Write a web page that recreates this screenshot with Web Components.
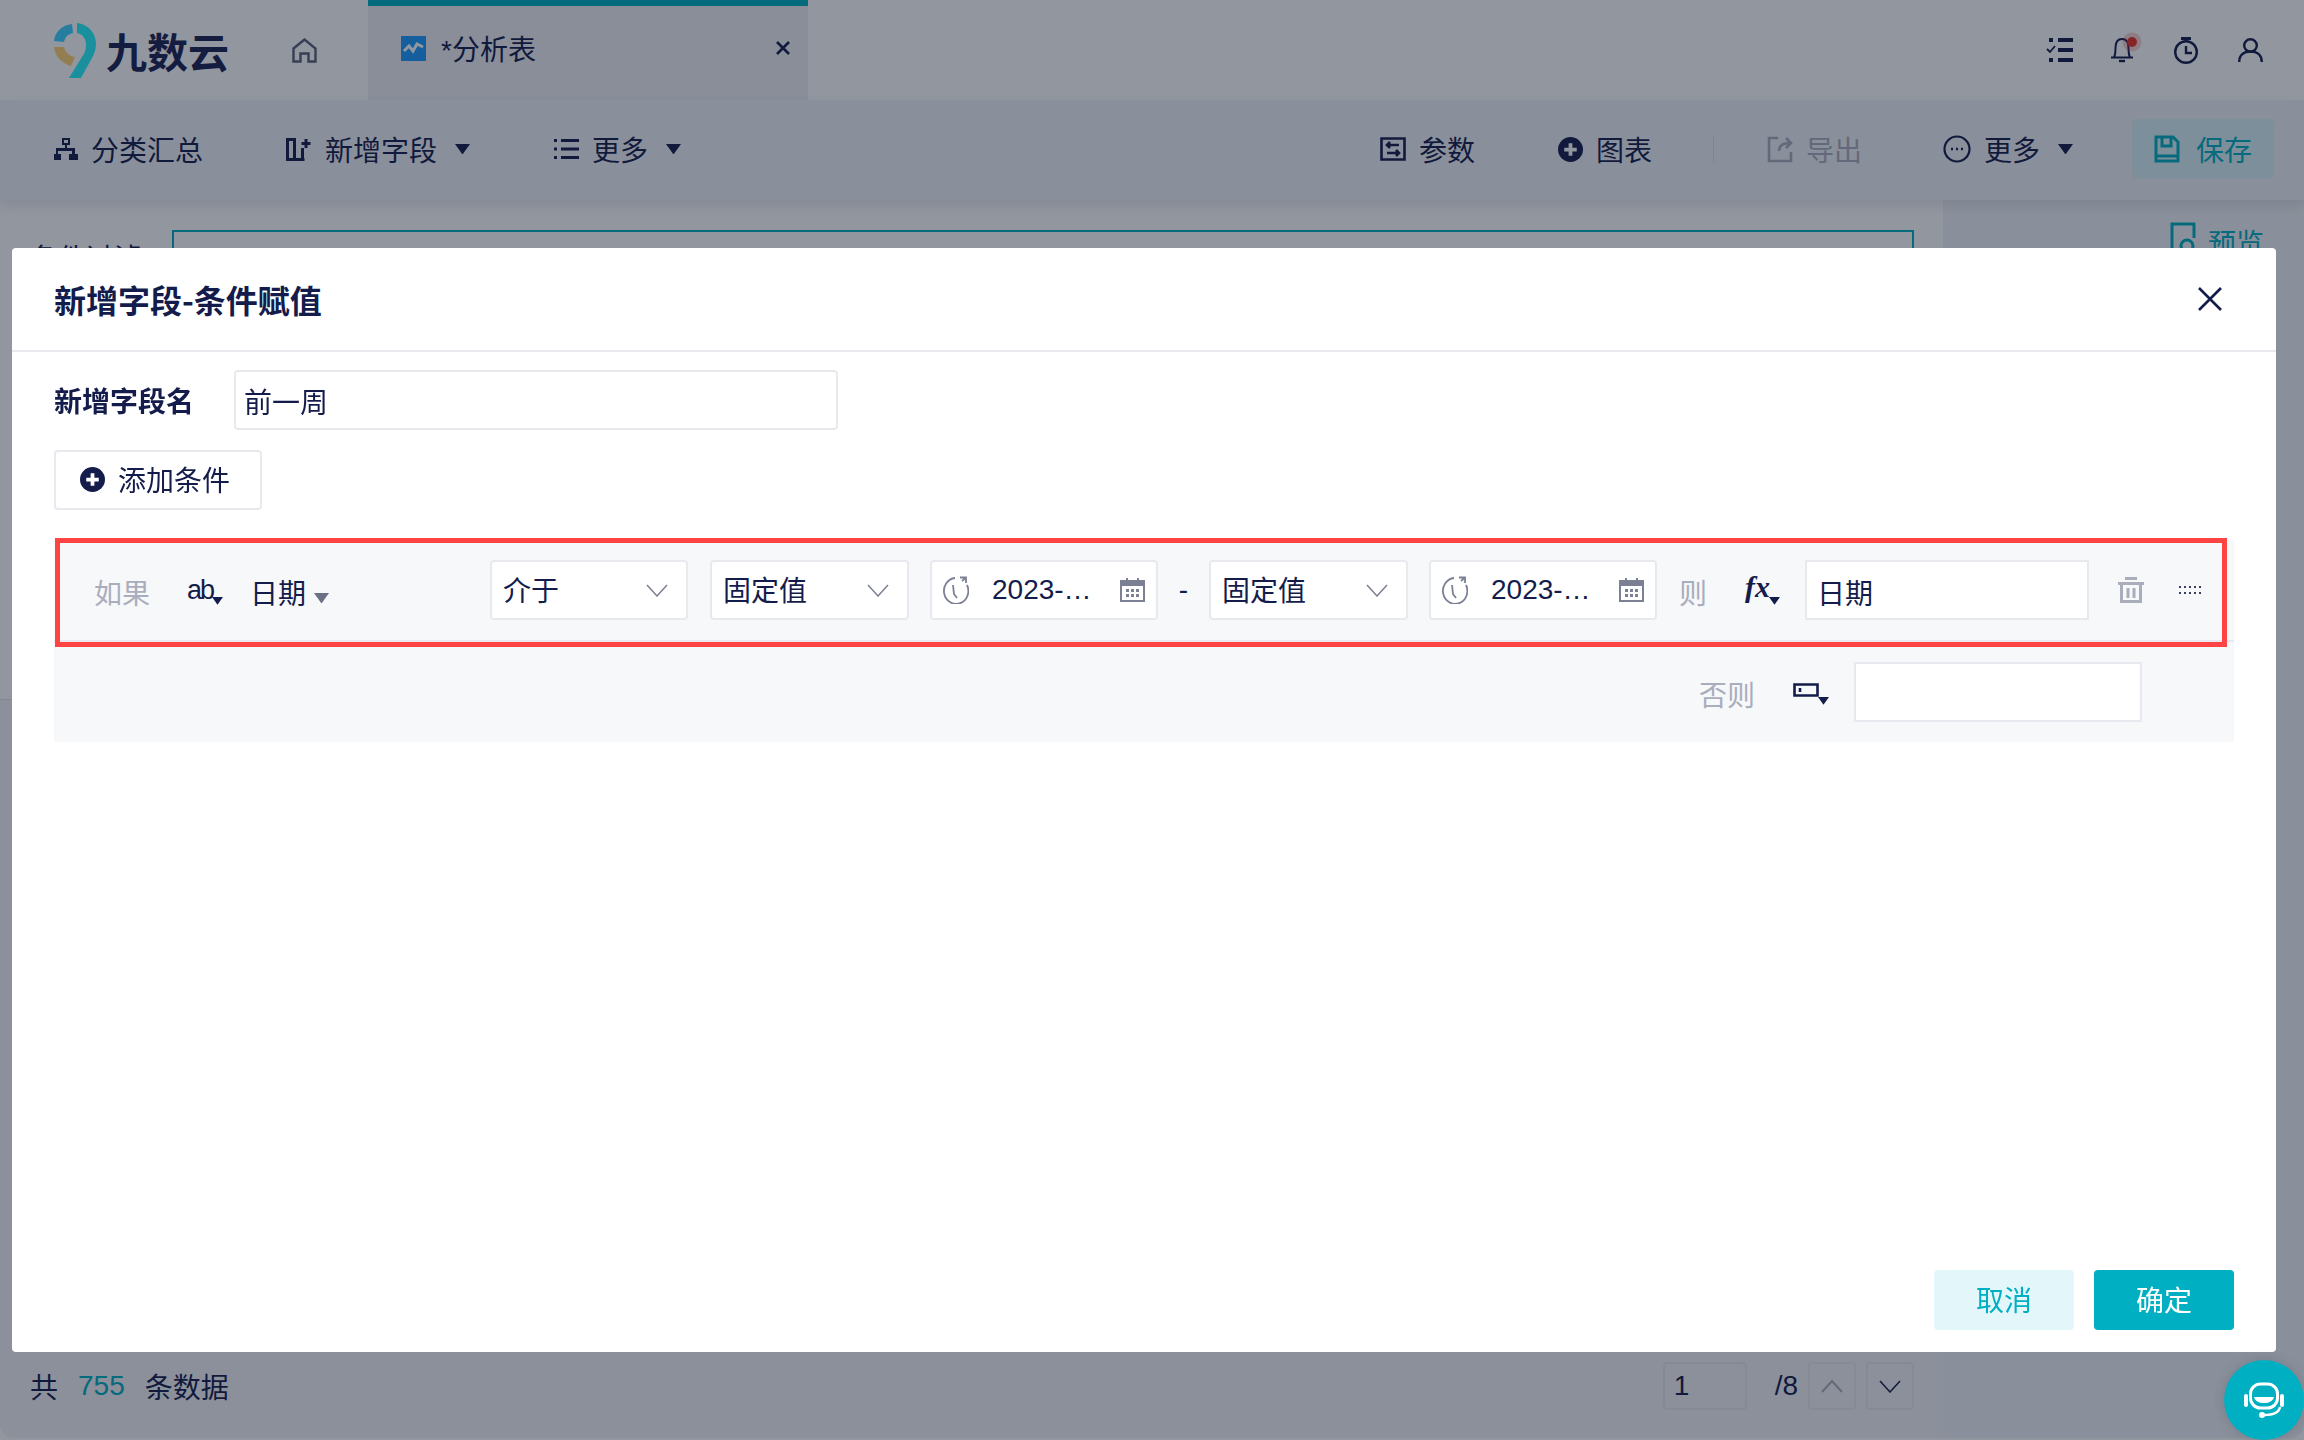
<!DOCTYPE html>
<html lang="zh">
<head>
<meta charset="utf-8">
<title>分析表</title>
<style>
    html, body { margin: 0; height: 100%; }
    body {
        width: 2304px;
        height: 1440px;
        overflow: hidden;
        font-family: "Liberation Sans", "Noto Sans CJK SC", sans-serif;
        --ink: #141c4c;
        --ink3: #a9adbc;
        --teal: #00afc2;
        --line: #e8e9ef;
    }
</style>
</head>
<body>
<app-page>
    <app-header></app-header>
    <app-toolbar></app-toolbar>
    <app-content></app-content>
</app-page>
<modal-mask></modal-mask>
<field-dialog heading="新增字段-条件赋值">
    <name-row></name-row>
    <add-condition></add-condition>
    <condition-block></condition-block>
</field-dialog>
<help-bubble></help-bubble>

<script>
const caret = (size = 14, color = 'currentColor') =>
    `<svg width="${size}" height="${size * 0.7}" viewBox="0 0 10 7"><path d="M0 0h10L5 7z" fill="${color}"/></svg>`;

const plusDot = (size) => `<svg width="${size}" height="${size}" viewBox="0 0 24 24"><circle cx="12" cy="12" r="12" fill="currentColor"/><path d="M12 6v12M6 12h12" stroke="#fff" stroke-width="3.6"/></svg>`;

const chevron = (color = '#7b8094') => `<svg width="22" height="13" viewBox="0 0 22 13"><path d="M1 1l10 11L21 1" fill="none" stroke="${color}" stroke-width="1.5"/></svg>`;

class AppPage extends HTMLElement {
    constructor() {
        super();
        this.attachShadow({ mode: 'open' });
        this.shadowRoot.innerHTML = `
            <style>
                :host { display: flex; flex-direction: column; width: 2304px; height: 1438px; background: #fff; border-radius: 0 0 14px 14px; overflow: hidden; color: var(--ink); }
            </style>
            <slot></slot>
        `;
    }
}

class AppHeader extends HTMLElement {
    constructor() {
        super();
        this.attachShadow({ mode: 'open' });
        this.shadowRoot.innerHTML = `
            <style>
                :host { display: flex; height: 100px; background: #fff; flex: none; }
                .brand { width: 240px; display: flex; align-items: center; padding: 0 0 0 54px; box-sizing: border-box; }
                .brand svg { flex: none; }
                .brand b { font: 700 41px "Noto Sans CJK SC", sans-serif; margin-left: 10px; color: #1a2452; line-height: 1; white-space: nowrap; }
                .home { width: 128px; display: flex; justify-content: center; align-items: center; }
                .tab { width: 440px; background: #eef1f5; border-top: 6px solid var(--teal); box-sizing: border-box; display: flex; align-items: center; padding: 0 17px 10px 33px; font-size: 28px; }
                .tab span { flex: 1; margin-left: 15px; }
                .tab .close { flex: none; }
                .tools { flex: 1; display: flex; justify-content: flex-end; align-items: center; padding-right: 41px; }
                .tools svg { display: block; overflow: visible; }
            </style>
            <div class="brand">
                <svg width="42" height="55" viewBox="0 0 42 55">
                    <path d="M18 1C8 2 1 9 0 18l10 1c1-5 4-8 9-9z" fill="#3ad2ff"/>
                    <path d="M0 24c1 9 7 16 17 19l4-9c-6-1-10-5-11-10z" fill="#ffd470"/>
                    <path d="M23 0c11 1 19 10 19 21 0 6-2 10-4 14L27 55H15l13-21c3-4 4-8 4-13 0-6-4-10-9-11z" fill="#25f5ff"/>
                </svg>
                <b>九数云</b>
            </div>
            <div class="home">
                <svg width="25" height="25" viewBox="0 0 25 25" fill="none" stroke="#5a6177" stroke-width="2.4"><path d="M1.500 10.500L12.500 1.500l11 9v13h-7v-8h-8v8h-7z"/></svg>
            </div>
            <div class="tab">
                <svg width="25" height="25" viewBox="0 0 25 25"><rect width="25" height="25" fill="#1c9cff"/><path d="M3 15l5-5 4 5 4-7 6 3" fill="none" stroke="#fff" stroke-width="3"/></svg>
                <span>*分析表</span>
                <svg class="close" width="16" height="16" viewBox="0 0 16 16"><path d="M2 2l12 12M14 2L2 14" stroke="currentColor" stroke-width="2.6"/></svg>
            </div>
            <div class="tools">
                <svg width="26" height="24" viewBox="0 0 26 24" fill="currentColor"><path d="M2 0h4v4H2zM2 20h4v4H2zM11 0h15v4H11zM11 10h15v4H11zM11 20h15v4H11z"/><path d="M0 11l3 3 5-6" fill="none" stroke="currentColor" stroke-width="1.8"/></svg>
                <svg style="margin-left:38px" width="22" height="24" viewBox="0 0 22 24" fill="none" stroke="currentColor" stroke-width="2"><path d="M0 19.500h22M3 19.500c1.500-3 1.500-5 1.500-10C4.500 4 7 1 11 1s6.500 3 6.500 8.500c0 5 0 7 1.500 10"/><path d="M8 23h6" stroke-width="2.400"/><circle cx="21" cy="4" r="5" fill="#e6332a" stroke="none"/><circle cx="21" cy="4" r="9.500" fill="#e6332a" opacity=".22" stroke="none"/></svg>
                <svg style="margin-left:41px" width="24" height="27" viewBox="0 0 24 27" fill="none" stroke="currentColor" stroke-width="2.400"><circle cx="12" cy="15" r="10.800"/><path d="M12 9v7h6" /><path d="M7 1.500h10" stroke-width="3"/><path d="M12 2v3"/></svg>
                <svg style="margin-left:40px" width="25" height="24" viewBox="0 0 25 24" fill="none" stroke="currentColor" stroke-width="2.400"><circle cx="12.500" cy="7.500" r="6.300"/><path d="M1.200 24c0-7 4.500-10.500 11.300-10.500S23.800 17 23.800 24"/></svg>
            </div>
        `;
    }
}

class ToolButton extends HTMLElement {
    constructor() {
        super();
        this.attachShadow({ mode: 'open' });
        this.shadowRoot.innerHTML = `
            <style>
                :host { display: flex; align-items: center; gap: 13px; font-size: 28px; white-space: nowrap; }
                :host([disabled]) { color: #a9adbc; }
                :host([accent]) { color: var(--teal); background: #d9f3f6; width: 142px; height: 60px; justify-content: center; gap: 16px; border-radius: 4px; }
                .tri { margin-left: 5px; display: flex; }
                ::slotted(svg) { display: block; flex: none; }
            </style>
            <slot name="icon"></slot>
            <slot></slot>
            ${this.hasAttribute('menu') ? `<span class="tri">${caret(15)}</span>` : ''}
        `;
    }
}

class AppToolbar extends HTMLElement {
    constructor() {
        super();
        this.attachShadow({ mode: 'open' });
        this.shadowRoot.innerHTML = `
            <style>
                :host { display: flex; align-items: center; height: 100px; flex: none; padding: 0 30px 0 54px; box-sizing: border-box; background: #f1f4f7; box-shadow: 0 6px 12px rgba(20,30,60,.1); position: relative; }
                .left, .right { display: flex; align-items: center; }
                .left { gap: 83px; flex: 1; padding-bottom: 2px; }
                .right { padding-bottom: 2px; }
                .sep { width: 1px; height: 28px; background: #dcdfe6; margin: 0 53px 0 61px; }
                .m1 { margin-right: 83px; }
                .m3 { margin-right: 81px; }
                .m4 { margin-right: 59px; }
            </style>
            <div class="left">
                <tool-button>
                    <svg slot="icon" width="24" height="22" viewBox="0 0 24 22" fill="currentColor"><path d="M8 0h8v7h-3v3h8v6h3v6h-9v-6h3v-3H4v3h3v6H0v-6h2v-6h9V7H8zM10 2v3h4V2z"/></svg>
                    分类汇总
                </tool-button>
                <tool-button menu>
                    <svg slot="icon" width="26" height="23" viewBox="0 0 26 23" fill="none" stroke="currentColor" stroke-width="3"><path d="M1.500 1.500h7v20h-7zM8.500 21.500h10M16.500 10v11.500M20 1v9M15.500 5.500h9"/></svg>
                    新增字段
                </tool-button>
                <tool-button menu>
                    <svg slot="icon" width="26" height="22" viewBox="0 0 26 22" fill="none" stroke="currentColor" stroke-width="3"><path d="M8 2.500h18M8 11h18M8 19.500h18M1 2.500h3M1 11h3M1 19.500h3"/></svg>
                    更多
                </tool-button>
            </div>
            <div class="right">
                <tool-button class="m1">
                    <svg slot="icon" width="26" height="24" viewBox="0 0 26 24" fill="none" stroke="currentColor" stroke-width="2.600"><path d="M1.500 1.500h23v21h-23zM19 8H7m3-3L7 8l3 3M7 16h12m-3-3l3 3-3 3"/></svg>
                    参数
                </tool-button>
                <tool-button>
                    <span slot="icon" style="display:flex">${plusDot(25)}</span>
                    图表
                </tool-button>
                <div class="sep"></div>
                <tool-button disabled class="m3">
                    <svg slot="icon" width="26" height="28" viewBox="0 0 26 28" fill="none" stroke="currentColor" stroke-width="2.600"><path d="M11 3H2v23h22v-9M12 16c0-6 4-8 11-8m-4-5l5 5-5 5"/></svg>
                    导出
                </tool-button>
                <tool-button menu class="m4">
                    <svg slot="icon" width="28" height="28" viewBox="0 0 28 28" fill="none" stroke="currentColor" stroke-width="2.200"><circle cx="14" cy="14" r="12.500"/><path d="M8 14h2M13 14h2M18 14h2" stroke-width="2.600"/></svg>
                    更多
                </tool-button>
                <tool-button accent>
                    <svg slot="icon" width="26" height="28" viewBox="0 0 26 28" fill="none" stroke="currentColor" stroke-width="3"><path d="M2 2h17l5 5v19H2zM8 2v9h9V2M2 21h22"/></svg>
                    保存
                </tool-button>
            </div>
        `;
    }
}

class AppContent extends HTMLElement {
    constructor() {
        super();
        this.attachShadow({ mode: 'open' });
        this.shadowRoot.innerHTML = `
            <style>
                :host { display: flex; flex: 1; min-height: 0; background: #fff; }
                .main { flex: none; width: 1943px; display: flex; flex-direction: column; }
                .filter { display: flex; gap: 28px; flex: none; height: 500px; box-sizing: border-box; padding: 30px 0 0 30px; border-bottom: 1px solid #e2e4ea; }
                .filter span { font-size: 28px; width: 114px; line-height: 60px; white-space: nowrap; overflow: hidden; }
                .filter div { width: 1742px; height: 60px; border: 2px solid var(--teal); box-sizing: border-box; }
                .table { flex: 1; background: #f3f5f8; display: flex; flex-direction: column; justify-content: flex-end; padding: 0 29px 28px 30px; }
                .foot { display: flex; align-items: center; font-size: 28px; height: 48px; }
                .foot b { color: var(--teal); font-weight: 400; margin: 0 20px; }
                .pager { margin-left: auto; display: flex; align-items: center; }
                .box { border: 2px solid var(--line); border-radius: 4px; box-sizing: border-box; height: 48px; display: flex; align-items: center; justify-content: center; }
                .num { width: 84px; justify-content: flex-start; padding-left: 9px; margin-right: 28px; }
                .sq { width: 48px; margin-left: 10px; }
                .side { flex: 1; background: #f1f4f7; display: flex; justify-content: flex-end; padding: 22px 40px 0 0; }
                .preview { display: flex; gap: 10px; font-size: 28px; color: var(--teal); height: 32px; align-items: flex-start; }
            </style>
            <div class="main">
                <div class="filter"><span>条件过滤</span><div></div></div>
                <div class="table">
                    <div class="foot">
                        <span>共</span><b>755</b><span>条数据</span>
                        <div class="pager">
                            <div class="box num">1</div>
                            <span>/8</span>
                            <div class="box sq"><svg width="22" height="13" viewBox="0 0 22 13"><path d="M1 12L11 1l10 11" fill="none" stroke="#a9adbc" stroke-width="2"/></svg></div>
                            <div class="box sq">${chevron('currentColor')}</div>
                        </div>
                    </div>
                </div>
            </div>
            <div class="side">
                <div class="preview">
                    <svg width="28" height="34" viewBox="0 0 28 34" fill="none" stroke="currentColor" stroke-width="3"><path d="M24 16V2H2v30h10"/><circle cx="17" cy="24" r="6"/></svg>
                    预览
                </div>
            </div>
        `;
    }
}

class ModalMask extends HTMLElement {
    constructor() {
        super();
        this.attachShadow({ mode: 'open' });
        this.shadowRoot.innerHTML = `
            <style>
                :host { display: block; position: fixed; inset: 0; background: rgba(13, 22, 42, .45); }
            </style>
        `;
    }
}

class FieldDialog extends HTMLElement {
    constructor() {
        super();
        this.attachShadow({ mode: 'open' });
        const heading = this.getAttribute('heading') || '';
        this.shadowRoot.innerHTML = `
            <style>
                :host { display: flex; flex-direction: column; position: fixed; left: 12px; top: 248px; width: 2264px; height: 1104px; background: #fff; border-radius: 4px; color: var(--ink); }
                header { height: 104px; flex: none; box-sizing: border-box; border-bottom: 2px solid var(--line); display: flex; align-items: center; justify-content: space-between; padding: 0 54px 0 42px; }
                h2 { margin: 0; font: 700 32px "Noto Sans CJK SC", sans-serif; }
                .body { flex: 1; padding: 18px 42px 0; }
                footer { flex: none; height: 82px; display: flex; justify-content: flex-end; gap: 20px; padding: 0 42px; }
                button { width: 140px; height: 60px; border: 0; border-radius: 4px; font: 28px "Noto Sans CJK SC", sans-serif; padding: 0 0 2px; }
                .cancel { background: #e3f7fa; color: var(--teal); }
                .ok { background: var(--teal); color: #fff; }
            </style>
            <header>
                <h2>${heading}</h2>
                <svg width="24" height="24" viewBox="0 0 24 24"><path d="M1 1l22 22M23 1L1 23" stroke="currentColor" stroke-width="2.600"/></svg>
            </header>
            <div class="body"><slot></slot></div>
            <footer>
                <button class="cancel">取消</button>
                <button class="ok">确定</button>
            </footer>
        `;
    }
}

class NameRow extends HTMLElement {
    constructor() {
        super();
        this.attachShadow({ mode: 'open' });
        this.shadowRoot.innerHTML = `
            <style>
                :host { display: flex; align-items: center; height: 60px; gap: 40px; }
                label { font: 700 28px "Noto Sans CJK SC", sans-serif; white-space: nowrap; width: 140px; }
            </style>
            <label>新增字段名</label>
            <text-box value="前一周" style="width:604px;padding-left:8px;padding-top:2px"></text-box>
        `;
    }
}

class TextBox extends HTMLElement {
    constructor() {
        super();
        this.attachShadow({ mode: 'open' });
        this.shadowRoot.innerHTML = `
            <style>
                :host { display: flex; align-items: center; height: 60px; box-sizing: border-box; background: #fff; border: 2px solid var(--line); border-radius: 4px; padding: 0 0 0 9px; font: 28px "Noto Sans CJK SC", sans-serif; flex: none; }
                :host([square]) { border-radius: 0; padding: 4px 0 0 10px; }
            </style>
            ${this.getAttribute('value') || ''}
        `;
    }
}

class AddCondition extends HTMLElement {
    constructor() {
        super();
        this.attachShadow({ mode: 'open' });
        this.shadowRoot.innerHTML = `
            <style>
                :host { display: flex; align-items: center; gap: 13px; width: 208px; height: 60px; margin-top: 20px; box-sizing: border-box; border: 2px solid var(--line); border-radius: 4px; padding: 0 0 2px 24px; font: 28px "Noto Sans CJK SC", sans-serif; }
                svg { display: block; }
            </style>
            ${plusDot(25)}
            添加条件
        `;
    }
}

class ConditionSelect extends HTMLElement {
    constructor() {
        super();
        this.attachShadow({ mode: 'open' });
        this.shadowRoot.innerHTML = `
            <style>
                :host { display: flex; align-items: center; justify-content: space-between; height: 60px; box-sizing: border-box; flex: none; background: #fff; border: 2px solid var(--line); border-radius: 4px; padding: 0 18px 0 11px; font: 28px "Noto Sans CJK SC", sans-serif; }
                span { margin-top: -2px; }
            </style>
            <span>${this.getAttribute('label')}</span>
            ${chevron()}
        `;
    }
}

class DateBox extends HTMLElement {
    constructor() {
        super();
        this.attachShadow({ mode: 'open' });
        this.shadowRoot.innerHTML = `
            <style>
                :host { display: flex; align-items: center; width: 228px; height: 60px; box-sizing: border-box; flex: none; background: #fff; border: 2px solid var(--line); border-radius: 4px; padding: 0 11px 0 10px; font: 28px "Liberation Sans", sans-serif; }
                span { flex: 1; margin-left: 23px; }
                svg { display: block; flex: none; }
            </style>
            <svg width="27" height="28" viewBox="0 0 27 28" fill="none" stroke="#7b8094" stroke-width="1.800"><path d="M13 2A12.200 13 0 1 0 25 9"/><path d="M18 1.500h6V7M24 1.500L20 5M11 9l1 9 3 4"/></svg>
            <span>2023-…</span>
            <svg width="25" height="24" viewBox="0 0 25 24"><path d="M1 3h23v20H1z" fill="none" stroke="#7b8094" stroke-width="2"/><path d="M1 4h23v4H1zM6 0h2v4H6zM17 0h2v4h-2z" fill="#7b8094"/><path d="M6 11h3v3H6zM11 11h3v3h-3zM16 11h3v3h-3zM6 16h3v3H6zM11 16h3v3h-3zM16 16h3v3h-3z" fill="#7b8094"/></svg>
        `;
    }
}

class ConditionBlock extends HTMLElement {
    constructor() {
        super();
        this.attachShadow({ mode: 'open' });
        this.shadowRoot.innerHTML = `
            <style>
                :host { display: block; position: relative; margin-top: 30px; background: #f7f8fa; height: 202px; font: 28px "Noto Sans CJK SC", sans-serif; }
                .row { display: flex; align-items: center; height: 102px; box-sizing: border-box; border-bottom: 2px solid var(--line); padding-left: 40px; }
                .muted { color: var(--ink3); flex: none; padding-top: 3px; white-space: nowrap; }
                .ab { position: relative; flex: none; margin-left: 37px; font: 27px "Liberation Sans", sans-serif; letter-spacing: -2px; width: 36px; height: 36px; line-height: 36px; }
                .ab svg, .fx svg, .slotbox svg { position: absolute; right: 0; bottom: 3px; }
                .field { flex: none; margin-left: 27px; width: 56px; padding-top: 3px; white-space: nowrap; }
                .tri { flex: none; margin-left: 8px; width: 176px; display: flex; color: #6b7085; padding-top: 17px; box-sizing: border-box; }
                .fx { position: relative; width: 35px; height: 36px; margin: 0 25px 0 38px; font: italic 700 30px "Liberation Serif", serif; line-height: 30px; flex: none; }
                .dash { width: 51px; flex: none; text-align: center; font-family: "Liberation Sans", sans-serif; }
                .then { margin-left: 22px; }
                .trash { margin-left: 29px; flex: none; }
                .drag { margin-left: 35px; flex: none; }
                .else { display: flex; align-items: center; height: 100px; padding: 0 92px 0 0; justify-content: flex-end; }
                .slotbox { position: relative; flex: none; width: 36px; height: 32px; margin: 0 25px 0 38px; }
                .outline { position: absolute; left: 1px; top: -2px; right: 7px; height: 109px; box-sizing: border-box; border: 5px solid #ff4444; pointer-events: none; }
            </style>
            <div class="row">
                <span class="muted" style="width:56px">如果</span>
                <span class="ab">ab${caret(11)}</span>
                <span class="field">日期</span>
                <span class="tri">${caret(15)}</span>
                <condition-select label="介于" style="width:198px"></condition-select>
                <condition-select label="固定值" style="width:199px;margin-left:22px"></condition-select>
                <date-box style="margin-left:21px"></date-box>
                <span class="dash">-</span>
                <condition-select label="固定值" style="width:199px"></condition-select>
                <date-box style="margin-left:21px"></date-box>
                <span class="muted then">则</span>
                <span class="fx">fx${caret(11)}</span>
                <text-box square value="日期" style="width:284px"></text-box>
                <svg class="trash" width="26" height="26" viewBox="0 0 26 26" fill="none" stroke="#a9adbc" stroke-width="3"><path d="M7 1.500h12M0 6.500h26M3.500 8v16.500h19V8M10 11v10M16 11v10"/></svg>
                <svg class="drag" width="25" height="8" viewBox="0 0 25 8" fill="#3a4060"><path d="M0 0h2v2H0zM5 0h2v2H5zM10 0h2v2h-2zM15 0h2v2h-2zM20 0h2v2h-2zM0 6h2v2H0zM5 6h2v2H5zM10 6h2v2h-2zM15 6h2v2h-2zM20 6h2v2h-2z"/></svg>
            </div>
            <div class="else">
                <span class="muted">否则</span>
                <span class="slotbox">
                    <svg width="26" height="14" viewBox="0 0 26 14" style="left:0;top:7px" fill="none" stroke="currentColor" stroke-width="2.600"><path d="M1.500 1.500h23v11h-23zM7 5v4"/></svg>
                    ${caret(11)}
                </span>
                <text-box square value="" style="width:288px"></text-box>
            </div>
            <div class="outline"></div>
        `;
    }
}

class HelpBubble extends HTMLElement {
    constructor() {
        super();
        this.attachShadow({ mode: 'open' });
        this.shadowRoot.innerHTML = `
            <style>
                :host { display: flex; align-items: center; justify-content: center; position: fixed; left: 2224px; top: 1360px; width: 80px; height: 80px; background: #00afc2; border-radius: 50%; box-shadow: 0 0 12px rgba(13,22,42,.15); }
            </style>
            <svg width="40" height="36" viewBox="0 0 40 36" fill="none"><rect x="6.500" y="2" width="27" height="24" rx="10" stroke="#fff" stroke-width="3"/><path d="M10 15h20c-1 4-5 6-10 6s-9-2-10-6z" fill="#fff"/><path d="M2 14v9M38 14v9" stroke="#fff" stroke-width="4" stroke-linecap="round"/><path d="M36 25c-1 6-8 8-16 8" stroke="#fff" stroke-width="2.400"/><circle cx="18" cy="33" r="3" fill="#fff"/></svg>
        `;
    }
}

customElements.define('app-page', AppPage);
customElements.define('app-header', AppHeader);
customElements.define('tool-button', ToolButton);
customElements.define('app-toolbar', AppToolbar);
customElements.define('app-content', AppContent);
customElements.define('modal-mask', ModalMask);
customElements.define('text-box', TextBox);
customElements.define('name-row', NameRow);
customElements.define('add-condition', AddCondition);
customElements.define('condition-select', ConditionSelect);
customElements.define('date-box', DateBox);
customElements.define('condition-block', ConditionBlock);
customElements.define('field-dialog', FieldDialog);
customElements.define('help-bubble', HelpBubble);
</script>
</body>
</html>
